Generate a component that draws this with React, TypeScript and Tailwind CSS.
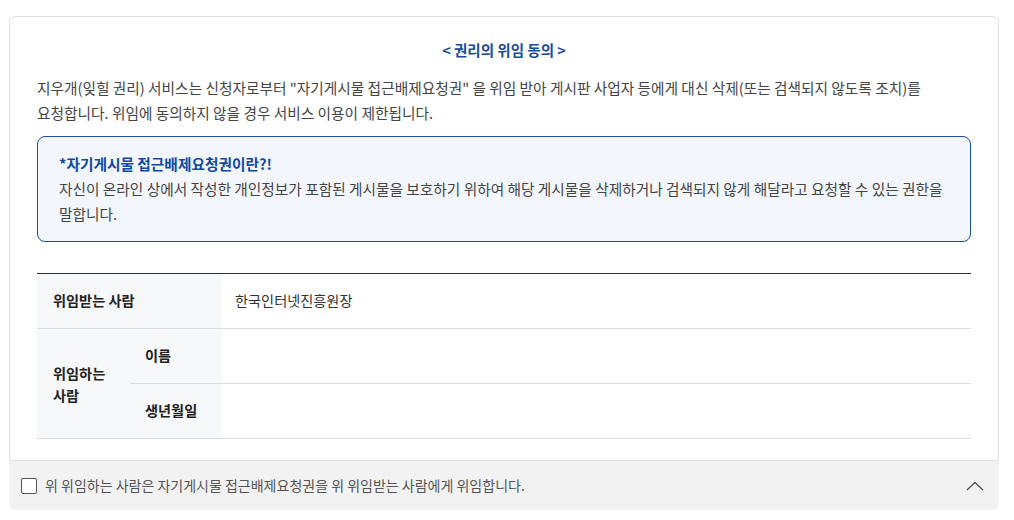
export default function App() {
  const font = { fontFamily: '"Noto Sans CJK KR", "Noto Sans", sans-serif' }

  return (
    <div className="min-h-[520px] bg-white pt-4" style={font}>
      <section className="ml-[9px] w-[990px] rounded-md bg-[#f2f2f2]">
        <div className="rounded-md border border-[#e1e1e1] bg-white px-[27px] pt-[23px] pb-[21px]">
          <h2 className="text-center text-[14.5px] leading-5 font-bold text-[#1a4a9c]">
            &lt; 권리의 위임 동의 &gt;
          </h2>

          <p className="mt-[15px] text-[14.7px] leading-[25px] text-[#444]">
            지우개(잊힐 권리) 서비스는 신청자로부터 "자기게시물 접근배제요청권" 을 위임 받아 게시판 사업자 등에게 대신 삭제(또는 검색되지 않도록 조치)를
            <br />
            요청합니다. 위임에 동의하지 않을 경우 서비스 이용이 제한됩니다.
          </p>

          <div className="mt-[11px] rounded-lg border border-[#1d4f98] bg-[#f3f7fd] px-[21px] pt-[14px] pb-[15px] text-[14.7px] leading-[25px]">
            <p className="font-semibold text-[#0d4aa3]">*자기게시물 접근배제요청권이란?!</p>
            <p className="text-[#444]">
              자신이 온라인 상에서 작성한 개인정보가 포함된 게시물을 보호하기 위하여 해당 게시물을 삭제하거나 검색되지 않게 해달라고 요청할 수 있는 권한을
              <br />
              말합니다.
            </p>
          </div>

          <div className="mt-[31px] grid grid-cols-[93px_92px_1fr] border-t border-[#333] text-[14.2px]">
            <div className="col-span-2 flex h-[55px] items-center border-b border-[#dcdcdc] bg-[#f7f8fa] pl-4 font-semibold text-[#222]">
              위임받는 사람
            </div>
            <div className="flex h-[55px] items-center border-b border-[#dcdcdc] pl-[13px] text-[#333]">
              한국인터넷진흥원장
            </div>

            <div className="row-span-2 flex items-center border-b border-[#dcdcdc] bg-[#f7f8fa] pl-4 leading-[22px] font-semibold text-[#222]">
              <span>
                위임하는
                <br />
                사람
              </span>
            </div>
            <div className="flex h-[55px] items-center border-b border-[#dcdcdc] bg-[#f7f8fa] pl-[15px] font-semibold text-[#222]">
              이름
            </div>
            <div className="h-[55px] border-b border-[#dcdcdc]" />
            <div className="flex h-[55px] items-center border-b border-[#dcdcdc] bg-[#f7f8fa] pl-[15px] font-semibold text-[#222]">
              생년월일
            </div>
            <div className="h-[55px] border-b border-[#dcdcdc]" />
          </div>
        </div>

        <div className="flex h-[49px] items-center justify-between pr-[15px] pl-3">
          <label className="flex items-center gap-2 text-[14px] text-[#555]">
            <input type="checkbox" className="h-4 w-4 appearance-none rounded-[2px] border border-[#555] bg-white" />
            위 위임하는 사람은 자기게시물 접근배제요청권을 위 위임받는 사람에게 위임합니다.
          </label>
          <svg width="18" height="10" viewBox="0 0 18 10" fill="none" stroke="#555" strokeWidth="1.3">
            <polyline points="1,9 9,1.5 17,9" />
          </svg>
        </div>
      </section>
    </div>
  )
}
